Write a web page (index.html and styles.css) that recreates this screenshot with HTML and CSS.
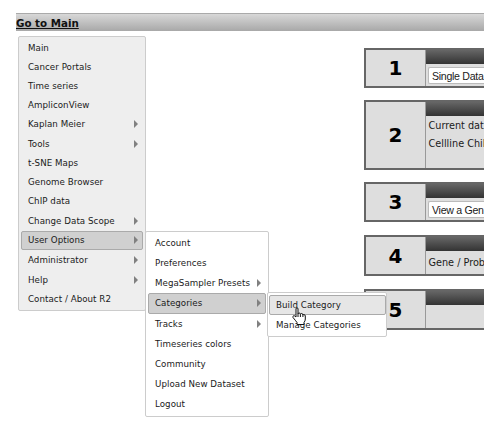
FILE: index.html
```html
<!DOCTYPE html>
<html lang="en">
<head>
<meta charset="utf-8">
<title>R2</title>
<link rel="stylesheet" href="styles.css">
</head>
<body>
<header class="bar"><a class="home">Go to Main</a></header>
<main class="content">
  <nav class="menu main-menu">
    <div class="item"><span>Main</span></div>
    <div class="item"><span>Cancer Portals</span></div>
    <div class="item"><span>Time series</span></div>
    <div class="item"><span>AmpliconView</span></div>
    <div class="item parent"><span>Kaplan Meier</span></div>
    <div class="item parent"><span>Tools</span></div>
    <div class="item"><span>t-SNE Maps</span></div>
    <div class="item"><span>Genome Browser</span></div>
    <div class="item"><span>ChIP data</span></div>
    <div class="item parent"><span>Change Data Scope</span></div>
    <div class="item parent active"><span>User Options</span></div>
    <div class="item parent"><span>Administrator</span></div>
    <div class="item parent"><span>Help</span></div>
    <div class="item"><span>Contact / About R2</span></div>
  </nav>
  <section class="steps">
    <div class="step"><div class="num">1</div><div class="body"><div class="head"></div><div class="select">Single Data</div></div></div>
    <div class="step tall"><div class="num">2</div><div class="body"><div class="head"></div><p>Current dat</p><p>Cellline Chil</p></div></div>
    <div class="step"><div class="num">3</div><div class="body"><div class="head"></div><div class="select">View a Gen</div></div></div>
    <div class="step"><div class="num">4</div><div class="body"><div class="head"></div><p class="gene">Gene / Prob</p></div></div>
    <div class="step"><div class="num">5</div><div class="body"><div class="head"></div></div></div>
  </section>
</main>
<nav class="menu sub user-menu">
  <div class="item"><span>Account</span></div>
  <div class="item"><span>Preferences</span></div>
  <div class="item parent"><span>MegaSampler Presets</span></div>
  <div class="item parent active"><span>Categories</span></div>
  <div class="item parent"><span>Tracks</span></div>
  <div class="item"><span>Timeseries colors</span></div>
  <div class="item"><span>Community</span></div>
  <div class="item"><span>Upload New Dataset</span></div>
  <div class="item"><span>Logout</span></div>
</nav>
<nav class="menu sub category-menu">
  <div class="item hover"><span>Build Category</span></div>
  <div class="item"><span>Manage Categories</span></div>
</nav>
<svg class="cursor" width="15" height="19" viewBox="0 0 15 19"><path d="M4 10V2Q4 .8 5 .8T6 2V7Q6 6 7.200 6T8.400 7.500Q8.500 6.500 9.700 6.500T10.900 8.200Q11 7.500 12 7.500T13.300 9V12Q13.300 14 12 15.500V17.500H5V15.500Q3.500 13.500 1 10.500Q.5 9 1.800 8.700Q2.700 8.500 4 10ZM6 7V10M8.400 7.500V10M10.900 8.200V10"/></svg>
</body>
</html>
```
FILE: styles.css
```css
* { box-sizing: border-box; }
body {
  margin: 0;
  width: 484px;
  height: 424px;
  overflow: hidden;
  position: relative;
  background: #fff;
  color: #1a1a1a;
  font-family: "DejaVu Sans", sans-serif;
}
.bar {
  margin: 13px 0 0 16px;
  height: 18px;
  border-top: 1px solid #aaa;
  background: linear-gradient(#d8d8d8, #a8a8a8);
  font-size: 10.3px;
  font-weight: bold;
  line-height: 18px;
}
.home { text-decoration: underline; color: #111; }
.content { display: flex; }
.menu {
  border: 1px solid #ccc;
  border-radius: 2px;
  font-size: 8.7px;
  letter-spacing: .04px;
  white-space: nowrap;
}
.item {
  display: flex;
  align-items: center;
  justify-content: space-between;
  height: 19px;
  padding: 0 4px 0 6px;
  border: 1px solid transparent;
  border-radius: 2px;
}
.parent { height: 19.7px; }
.parent::after {
  content: "";
  border: solid transparent;
  border-width: 4px 0 4px 4px;
  border-left-color: #808080;
}
.item.active { background: #d0d0d0; border-color: #aaa; }
.item.hover { background: #e6e6e6; border-color: #aaa; }
.main-menu {
  flex: none;
  width: 128px;
  height: 275px;
  margin: 5px 0 0 18px;
  padding: 1.500px 2px 0 2px;
  background: #eee;
}
.steps {
  width: 120px;
  margin: 17px 0 0 218px;
  display: flex;
  flex: none;
  flex-direction: column;
  gap: 12px;
}
.step {
  display: flex;
  height: 40px;
  border: 2px solid #666;
  border-right: 0;
  background: #dedede;
}
.step.tall { height: 70px; }
.step:nth-child(n+4) { height: 41px; margin-top: 1px; }
.num {
  flex: none;
  width: 60px;
  border-right: 1px solid #999;
  display: flex;
  align-items: center;
  justify-content: center;
  font-size: 20px;
  font-weight: bold;
  color: #000;
}
.body { flex: 1; min-width: 0; white-space: nowrap; }
.head { height: 14px; background: linear-gradient(#666, #333); }
.select {
  height: 17px;
  margin: 3px 0 0 2px;
  padding-left: 3px;
  border: 1px solid #bbb;
  border-right: 0;
  border-radius: 2px 0 0 2px;
  background: #fff;
  font: 10.6px/16px "Liberation Sans", sans-serif;
  letter-spacing: -.3px;
}
.body p { margin: 0 0 0 2.500px; font-size: 9.7px; line-height: 18px; }
.body .head + p { padding-top: 1px; }
.body p.gene.gene { padding-top: 3px; }
.sub { position: absolute; background: #fff; }
.user-menu {
  left: 145px;
  top: 231px;
  width: 124px;
  height: 186px;
  padding: 1px 2px 0 2px;
}
.user-menu .item { height: 20.130px; }
.category-menu {
  left: 267px;
  top: 292px;
  width: 120px;
  height: 45px;
  padding: 2px 0 0 1px;
}
.category-menu .item { height: 20px; }
.cursor {
  position: absolute;
  left: 292px;
  top: 307px;
  fill: #fff;
  stroke: #111;
  stroke-width: 1;
}
```
